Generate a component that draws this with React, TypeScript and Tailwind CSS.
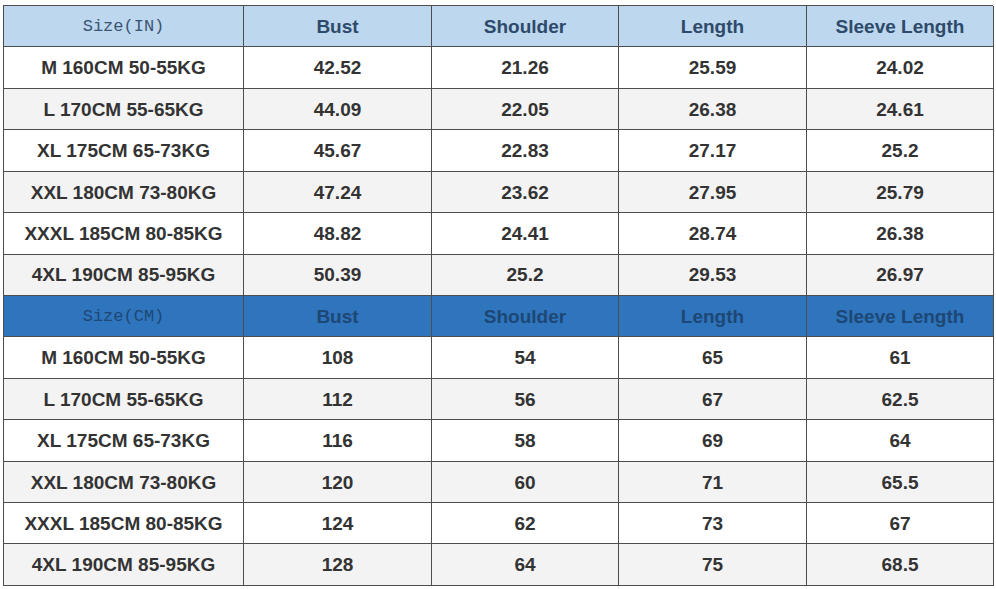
const inRows = [
  ['M 160CM 50-55KG', '42.52', '21.26', '25.59', '24.02'],
  ['L 170CM 55-65KG', '44.09', '22.05', '26.38', '24.61'],
  ['XL 175CM 65-73KG', '45.67', '22.83', '27.17', '25.2'],
  ['XXL 180CM 73-80KG', '47.24', '23.62', '27.95', '25.79'],
  ['XXXL 185CM 80-85KG', '48.82', '24.41', '28.74', '26.38'],
  ['4XL 190CM 85-95KG', '50.39', '25.2', '29.53', '26.97'],
];

const cmRows = [
  ['M 160CM 50-55KG', '108', '54', '65', '61'],
  ['L 170CM 55-65KG', '112', '56', '67', '62.5'],
  ['XL 175CM 65-73KG', '116', '58', '69', '64'],
  ['XXL 180CM 73-80KG', '120', '60', '71', '65.5'],
  ['XXXL 185CM 80-85KG', '124', '62', '73', '67'],
  ['4XL 190CM 85-95KG', '128', '64', '75', '68.5'],
];

const heads = ['Bust', 'Shoulder', 'Length', 'Sleeve Length'];
const cols = 'grid grid-cols-[240px_188px_187px_188px_187px]';
const cell = 'flex items-center justify-center border-r border-b border-[#4d4d4d] h-[41.43px] pt-[2px]';

const HeaderRow = ({ label, dark }: { label: string; dark?: boolean }) => (
  <div className={cols}>
    <div
      className={`${cell} ${dark ? 'bg-[#2f75bd] text-[#1d4774]' : 'bg-[#bdd7ee] text-[#3a5472]'} text-[17px] [font-family:'Liberation_Mono',monospace]`}
    >
      {label}
    </div>
    {heads.map((h) => (
      <div
        key={h}
        className={`${cell} ${dark ? 'bg-[#2f75bd] text-[#1d4774]' : 'bg-[#bdd7ee] text-[#2d4a6a]'} text-[19px] font-bold`}
      >
        {h}
      </div>
    ))}
  </div>
);

const DataRows = ({ rows }: { rows: string[][] }) => (
  <>
    {rows.map((r, i) => (
      <div key={r[0]} className={`${cols} ${i % 2 ? 'bg-[#f3f3f3]' : 'bg-white'}`}>
        {r.map((v, j) => (
          <div key={j} className={`${cell} text-[19px] font-bold text-[#333]`}>
            {v}
          </div>
        ))}
      </div>
    ))}
  </>
);

export default function App() {
  return (
    <div className="w-[996px] h-[589px] bg-white pt-[5px] pl-[3px] [font-family:'Liberation_Sans',Arial,sans-serif]">
      <div className="w-[990px] border-l border-t border-[#4d4d4d]">
        <HeaderRow label="Size(IN)" />
        <DataRows rows={inRows} />
        <HeaderRow label="Size(CM)" dark />
        <DataRows rows={cmRows} />
      </div>
    </div>
  );
}
